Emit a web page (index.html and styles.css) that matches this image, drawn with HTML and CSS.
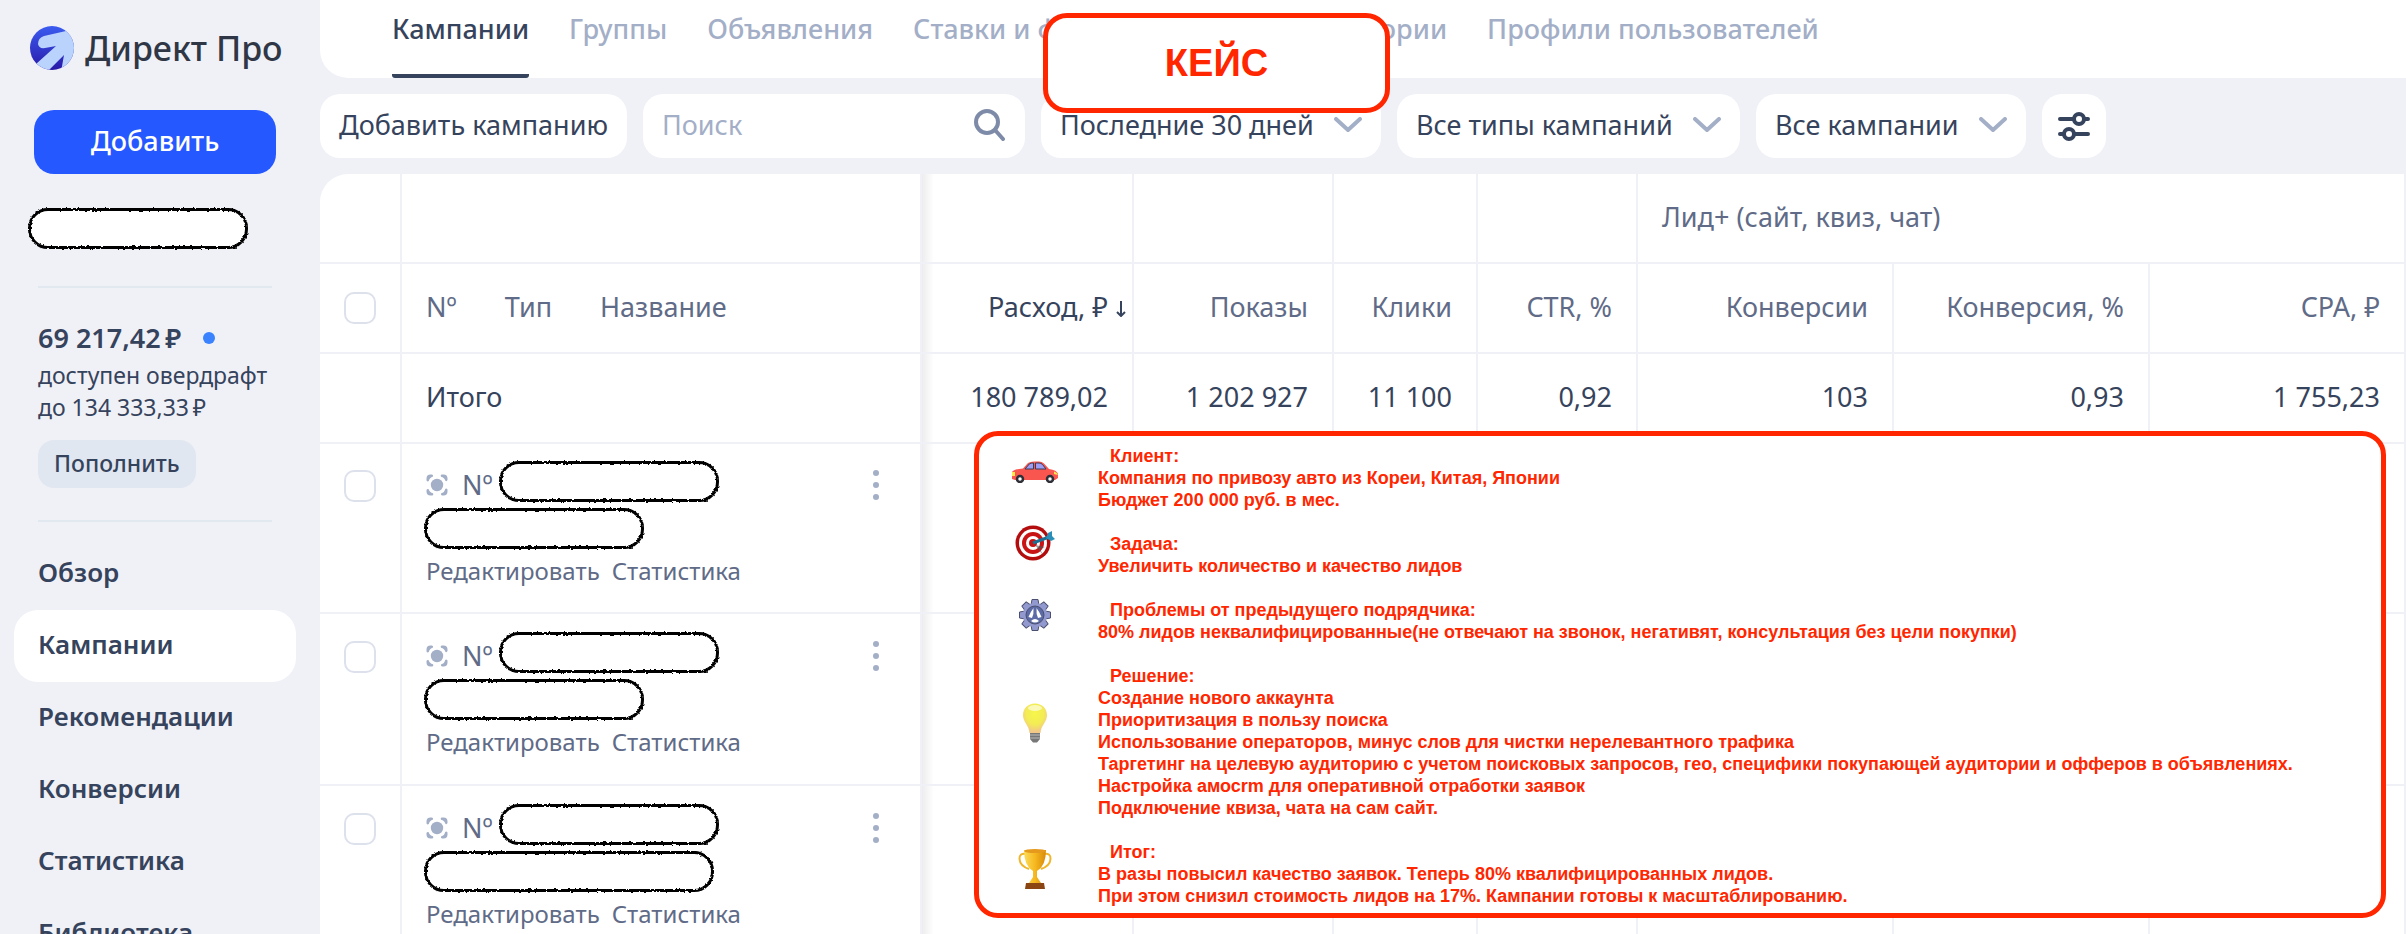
FILE: index.html
```html
<!DOCTYPE html>
<html lang="ru">
<head>
  <meta charset="UTF-8">
  <title>Директ Про</title>
  <link rel="stylesheet" href="styles.css">
</head>
<body>

<!-- shared shapes -->
<svg class="defs" aria-hidden="true">
  <defs>
    <filter id="rough">
      <feTurbulence type="fractalNoise" baseFrequency="0.4" numOctaves="2" seed="4" result="noise"/>
      <feDisplacementMap in="SourceGraphic" in2="noise" scale="3" xChannelSelector="R" yChannelSelector="G"/>
    </filter>
    <symbol id="chevron" viewBox="0 0 28 16">
      <path d="M2 2 L14 13 L26 2" fill="none" stroke="currentColor" stroke-width="4" stroke-linecap="round" stroke-linejoin="round"/>
    </symbol>
    <symbol id="kind" viewBox="0 0 22 22">
      <circle cx="11" cy="11" r="6.2" fill="currentColor"/>
      <g fill="currentColor">
        <path id="corner" d="M0.5 6.5 V4.5 Q0.500 0.500 4.500 0.500 H6 Q7.500 1 7 2.500 Q3.500 3.500 2.800 7 Q1.500 8 0.500 6.500Z"/>
        <use href="#corner" transform="rotate(90 11 11)"/>
        <use href="#corner" transform="rotate(180 11 11)"/>
        <use href="#corner" transform="rotate(270 11 11)"/>
      </g>
    </symbol>
    <symbol id="dots" viewBox="0 0 6 30">
      <g fill="currentColor"><circle cx="3" cy="3" r="3"/><circle cx="3" cy="15" r="3"/><circle cx="3" cy="27" r="3"/></g>
    </symbol>
  </defs>
</svg>

<div class="app">
  <aside class="sidebar">
    <a class="logo" href="#">
      <svg width="44" height="44" viewBox="0 0 44 44" aria-hidden="true">
        <defs>
          <linearGradient id="logoBlue" x1="0" y1="0" x2="0" y2="1">
            <stop offset="0" stop-color="#3a5cf0"/>
            <stop offset="1" stop-color="#2a18a8"/>
          </linearGradient>
          <clipPath id="logoClip"><circle cx="22" cy="22" r="22"/></clipPath>
        </defs>
        <g clip-path="url(#logoClip)">
          <rect width="44" height="44" fill="url(#logoBlue)"/>
          <path d="M36 5 L14 10 Q8 12 8 18 Q9 23 15 22 L26 20 L6 38 L10 46 L19 44 L34 29 L31 46 H46 V8Z" fill="#b9d3fd"/>
        </g>
      </svg>
      <span>Директ Про</span>
    </a>
    <button class="btn-add" type="button">Добавить</button>
    <div class="blot blot-account"></div>
    <div class="balance">
      <p class="balance-sum">69&nbsp;217,42&#8201;₽ <i class="dot"></i></p>
      <p class="balance-note">доступен овердрафт<br>до 134&nbsp;333,33&#8201;₽</p>
      <button class="btn-pay" type="button">Пополнить</button>
    </div>
    <nav class="menu">
      <a href="#">Обзор</a>
      <a href="#" class="active">Кампании</a>
      <a href="#">Рекомендации</a>
      <a href="#">Конверсии</a>
      <a href="#">Статистика</a>
      <a href="#">Библиотека</a>
    </nav>
  </aside>

  <main class="content">
    <nav class="tabs">
      <a href="#" class="active">Кампании</a>
      <a href="#">Группы</a>
      <a href="#">Объявления</a>
      <a href="#">Ставки и фразы</a>
      <a href="#">Условия и аудитории</a>
      <a href="#">Профили пользователей</a>
    </nav>

    <div class="filters">
      <button class="box" type="button">Добавить кампанию</button>
      <label class="box search">
        <input type="text" placeholder="Поиск" aria-label="Поиск">
        <svg width="32" height="32" viewBox="0 0 32 32" aria-hidden="true">
          <g fill="none" stroke="currentColor" stroke-width="4" stroke-linecap="round">
            <circle cx="13" cy="13" r="11"/>
            <path d="M21 21 L29 30"/>
          </g>
        </svg>
      </label>
      <label class="box drop">
        <select aria-label="Период"><option>Последние 30 дней</option></select>
        <svg class="chevron"><use href="#chevron"/></svg>
      </label>
      <label class="box drop">
        <select aria-label="Тип кампании"><option>Все типы кампаний</option></select>
        <svg class="chevron"><use href="#chevron"/></svg>
      </label>
      <label class="box drop">
        <select aria-label="Кампании"><option>Все кампании</option></select>
        <svg class="chevron"><use href="#chevron"/></svg>
      </label>
      <button class="box tune" type="button" aria-label="Настройки">
        <svg width="32" height="32" viewBox="0 0 32 32" aria-hidden="true">
          <g fill="none" stroke="currentColor" stroke-width="4" stroke-linecap="round">
            <path d="M2 9 H15 M27 9 H30 M2 24 H5 M17 24 H30"/>
            <circle cx="21" cy="9" r="5"/>
            <circle cx="11" cy="24" r="5"/>
          </g>
        </svg>
      </button>
    </div>

    <table class="stats">
      <colgroup>
        <col class="c-check"><col class="c-name"><col class="c-cost"><col class="c-shows"><col class="c-clicks"><col class="c-ctr"><col class="c-goal"><col class="c-goal"><col class="c-goal">
      </colgroup>
      <thead>
        <tr>
          <td></td><td></td><td></td><td></td><td></td><td></td>
          <th colspan="3" class="group">Лид+ (сайт, квиз, чат)</th>
        </tr>
        <tr>
          <td class="check"><input type="checkbox" aria-label="Выбрать все"></td>
          <th class="name"><span>Nº</span><span>Тип</span><span>Название</span></th>
          <th class="sorted"><span>Расход, ₽<svg class="arrow" viewBox="0 0 10 16" aria-hidden="true"><path d="M5 0 V15 M1 11 L5 15 L9 11" fill="none" stroke="currentColor" stroke-width="2"/></svg></span></th>
          <th>Показы</th>
          <th>Клики</th>
          <th>CTR, %</th>
          <th>Конверсии</th>
          <th>Конверсия, %</th>
          <th>CPA, ₽</th>
        </tr>
      </thead>
      <tbody>
        <tr class="total">
          <td></td>
          <td class="name">Итого</td>
          <td>180&nbsp;789,02</td>
          <td>1&nbsp;202&nbsp;927</td>
          <td>11&nbsp;100</td>
          <td>0,92</td>
          <td>103</td>
          <td>0,93</td>
          <td>1&nbsp;755,23</td>
        </tr>
        <tr class="campaign">
          <td class="check"><input type="checkbox" aria-label="Выбрать кампанию"></td>
          <td class="info">
            <div class="info-top"><svg class="kind"><use href="#kind"/></svg>Nº<span class="blot"></span><button class="more" type="button" aria-label="Ещё"><svg><use href="#dots"/></svg></button></div>
            <div class="blot"></div>
            <div class="links"><a href="#">Редактировать</a><a href="#">Статистика</a></div>
          </td>
          <td></td><td></td><td></td><td></td><td></td><td></td><td></td>
        </tr>
        <tr class="campaign">
          <td class="check"><input type="checkbox" aria-label="Выбрать кампанию"></td>
          <td class="info">
            <div class="info-top"><svg class="kind"><use href="#kind"/></svg>Nº<span class="blot"></span><button class="more" type="button" aria-label="Ещё"><svg><use href="#dots"/></svg></button></div>
            <div class="blot"></div>
            <div class="links"><a href="#">Редактировать</a><a href="#">Статистика</a></div>
          </td>
          <td></td><td></td><td></td><td></td><td></td><td></td><td></td>
        </tr>
        <tr class="campaign">
          <td class="check"><input type="checkbox" aria-label="Выбрать кампанию"></td>
          <td class="info">
            <div class="info-top"><svg class="kind"><use href="#kind"/></svg>Nº<span class="blot"></span><button class="more" type="button" aria-label="Ещё"><svg><use href="#dots"/></svg></button></div>
            <div class="blot blot-long"></div>
            <div class="links"><a href="#">Редактировать</a><a href="#">Статистика</a></div>
          </td>
          <td></td><td></td><td></td><td></td><td></td><td></td><td></td>
        </tr>
      </tbody>
    </table>
  </main>

  <h1 class="note case-title">КЕЙС</h1>

  <section class="note case">
    <div class="case-icons" aria-hidden="true">
      <!-- car -->
      <svg width="48" height="22" viewBox="0 0 48 22">
        <path d="M1 18 L1 11 Q3 8 12 7.500 L17 2 Q19 0.500 23 0.500 H28 Q31 0.500 33 2.500 L38 8 Q46 9 47 13 V17 L44 19 H4Z" fill="#f9564f"/>
        <path d="M14 8 L18.500 2.800 Q20 2 22.500 2 V8Z M24.500 2 H28 Q30 2 31.500 3.500 L35 8 H24.500Z" fill="#9d9df5" stroke="#3c3c55"/>
        <path d="M1 11 H4 V15 H1Z M43 10.500 Q46 11 47 14 L43 13Z" fill="#ffe94d"/>
        <g fill="#fff" stroke="#2f2f38" stroke-width="2.500"><circle cx="9" cy="18" r="3"/><circle cx="39" cy="18" r="3"/></g>
      </svg>
      <!-- target -->
      <svg width="40" height="36" viewBox="0 0 40 36">
        <circle cx="18" cy="18" r="17.500" fill="#b30d0d"/>
        <circle cx="18" cy="18" r="14" fill="#fff"/>
        <circle cx="18" cy="18" r="11" fill="#c81414"/>
        <circle cx="18" cy="18" r="7" fill="#fff"/>
        <circle cx="18" cy="18" r="4" fill="#c81414"/>
        <path d="M20 20 L28 30 L25 24 L30 22Z" fill="#555" opacity="0.6"/>
        <path d="M18 18 L34 12" stroke="#1d6f93" stroke-width="3"/>
        <path d="M31 13 L33 8 L37 6 V11 L40 14 L36 16Z" fill="#2a8fb8"/>
      </svg>
      <!-- gear -->
      <svg width="32" height="32" viewBox="-16 -16 32 32">
        <g fill="#9299cf" stroke="#4b5070">
          <path id="tooth" d="M-4 -10 L-3 -15.500 H3 L4 -10Z"/>
          <use href="#tooth" transform="rotate(45)"/><use href="#tooth" transform="rotate(90)"/><use href="#tooth" transform="rotate(135)"/>
          <use href="#tooth" transform="rotate(180)"/><use href="#tooth" transform="rotate(225)"/><use href="#tooth" transform="rotate(270)"/><use href="#tooth" transform="rotate(315)"/>
        </g>
        <circle r="12" fill="#9299cf"/>
        <circle r="9" fill="#5c6aa6" stroke="#4b5070"/>
        <path d="M-1.500 -7 Q-4 -4 -6.500 2 L-3 3 Q-1 -1 -1.500 -7Z M1.500 -7 Q4 -4 6.500 2 L3 3 Q1 -1 1.500 -7Z M-4 6 Q0 2 4 6 Q0 9 -4 6Z" fill="#fff"/>
      </svg>
      <!-- bulb -->
      <svg width="26" height="40" viewBox="0 0 26 40">
        <defs>
          <radialGradient id="bulbGlow" cx="0.5" cy="0.35" r="0.6">
            <stop offset="0" stop-color="#f6f64a"/><stop offset="0.6" stop-color="#f3ec55"/><stop offset="1" stop-color="#f2c987"/>
          </radialGradient>
        </defs>
        <path d="M13 0.500 C20 0.500 25 5.500 25 12 C25 19 19 22 18.500 30 H7.500 C7 22 1 19 1 12 C1 5.500 6 0.500 13 0.500Z" fill="url(#bulbGlow)"/>
        <ellipse cx="13" cy="5" rx="7" ry="3" fill="#fff" opacity="0.6"/>
        <path d="M8 30 H18 V36 L15 39.500 H11 L8 36Z" fill="#777"/>
        <path d="M8 32 H18 M8 35 H18" stroke="#bbb"/>
      </svg>
      <!-- trophy -->
      <svg width="34" height="40" viewBox="0 0 34 40">
        <defs>
          <linearGradient id="gold" x1="0" x2="1"><stop offset="0" stop-color="#fbdc5a"/><stop offset="0.5" stop-color="#f6b81f"/><stop offset="1" stop-color="#d98a0c"/></linearGradient>
        </defs>
        <path d="M8 5 Q1 4 1.500 10 Q2 17 11 20 M26 5 Q33 4 32.500 10 Q32 17 23 20" fill="none" stroke="#efb62b" stroke-width="2"/>
        <path d="M6 1 H28 Q28 17 19 22 V28 L23 34 H11 L15 28 V22 Q6 17 6 1Z" fill="url(#gold)"/>
        <ellipse cx="17" cy="2" rx="11" ry="2" fill="#e59a1e"/>
        <path d="M8 34 H26 L27 40 H7Z" fill="#8a4512"/>
      </svg>
    </div>

    <div class="case-text">
      <div>
        <h2>Клиент:</h2>
        <p>Компания по привозу авто из Кореи, Китая, Японии</p>
        <p>Бюджет 200 000 руб. в мес.</p>
      </div>
      <div>
        <h2>Задача:</h2>
        <p>Увеличить количество и качество лидов</p>
      </div>
      <div>
        <h2>Проблемы от предыдущего подрядчика:</h2>
        <p>80% лидов неквалифицированные(не отвечают на звонок, негативят, консультация без цели покупки)</p>
      </div>
      <div>
        <h2>Решение:</h2>
        <p>Создание нового аккаунта</p>
        <p>Приоритизация в пользу поиска</p>
        <p>Использование операторов, минус слов для чистки нерелевантного трафика</p>
        <p>Таргетинг на целевую аудиторию с учетом поисковых запросов, гео, специфики покупающей аудитории и офферов в объявлениях.</p>
        <p>Настройка амосrm для оперативной отработки заявок</p>
        <p>Подключение квиза, чата на сам сайт.</p>
      </div>
      <div>
        <h2>Итог:</h2>
        <p>В разы повысил качество заявок. Теперь 80% квалифицированных лидов.</p>
        <p>При этом снизил стоимость лидов на 17%. Кампании готовы к масштаблированию.</p>
      </div>
    </div>
  </section>
</div>

</body>
</html>
```
FILE: styles.css
```css
* {
  box-sizing: border-box;
}

body {
  margin: 0;
  font-family: "Noto Sans", sans-serif;
  font-size: 27px;
  color: #36435c;
  background: #f0f1f7;
}

a {
  color: inherit;
  text-decoration: none;
}

p, h1, h2 {
  margin: 0;
}

button, input, select {
  font: inherit;
  color: inherit;
  border: none;
  padding: 0;
  background: none;
}

button {
  cursor: pointer;
}

.defs {
  position: absolute;
  width: 0;
  height: 0;
}

.app {
  position: relative;
  display: flex;
  height: 100vh;
  overflow: hidden;
}

/* Sidebar */
.sidebar {
  width: 320px;
  flex-shrink: 0;
  padding: 20px 24px 0 14px;
}

.logo {
  display: flex;
  align-items: center;
  gap: 11px;
  height: 56px;
  padding-left: 16px;
  font-size: 34px;
  font-weight: 500;
  color: #2f3747;
  white-space: nowrap;
}

.btn-add {
  display: block;
  width: 242px;
  height: 64px;
  margin: 34px 0 0 20px;
  padding-bottom: 3px;
  border-radius: 20px;
  background: #2658ff;
  color: white;
  font-weight: 500;
}

.blot {
  width: 220px;
  height: 41px;
  border: 3px solid #000;
  border-radius: 20px;
  background: white;
  filter: url(#rough);
}

.blot-account {
  margin: 34px 0 37px 14px;
}

.blot-long {
  width: 290px;
}

.balance {
  margin: 0 24px;
  padding: 34px 0 32px;
  border-top: 2px solid #e1e8f0;
  border-bottom: 2px solid #e1e8f0;
}

.balance-sum {
  display: flex;
  align-items: center;
  gap: 22px;
  font-weight: 600;
  line-height: 32px;
}

.dot {
  width: 12px;
  height: 12px;
  border-radius: 50%;
  background: #3b82ff;
}

.balance-note {
  margin-top: 5px;
  font-size: 23px;
  line-height: 32px;
  white-space: nowrap;
}

.btn-pay {
  display: block;
  height: 48px;
  margin-top: 17px;
  padding: 0 16px 2px;
  border-radius: 16px;
  background: #e1e7f0;
  font-size: 23px;
  font-weight: 500;
}

.menu {
  margin-top: 16px;
}

.menu a {
  display: block;
  padding: 0 24px 3px;
  border-radius: 24px;
  font-size: 26px;
  font-weight: 600;
  line-height: 69px;
}

.menu .active {
  background: white;
}

/* Top tabs and filters */
.content {
  flex: 1;
  min-width: 0;
}

.tabs {
  display: flex;
  gap: 40px;
  height: 78px;
  padding-left: 72px;
  border-bottom-left-radius: 28px;
  background: white;
  color: #a3aec7;
  font-weight: 500;
  line-height: 58px;
  white-space: nowrap;
}

.tabs .active {
  color: #36435c;
  border-bottom: 4px solid #36435c;
  border-radius: 3px;
}

.filters {
  display: flex;
  gap: 16px;
  padding: 16px 0;
}

.box {
  display: flex;
  align-items: center;
  height: 64px;
  padding: 0 19px 3px;
  border-radius: 20px;
  background: white;
  white-space: nowrap;
}

.search {
  width: 382px;
  color: #7e8ba8;
}

.search input {
  flex: 1;
  min-width: 0;
  outline: none;
}

.search input::placeholder {
  color: #a3aec7;
  opacity: 1;
}

.drop {
  gap: 20px;
}

.drop select {
  appearance: none;
  outline: none;
}

.chevron {
  width: 28px;
  height: 16px;
  color: #a3aec7;
}

.tune {
  padding: 0 16px;
}

/* Table */
.stats {
  width: 100%;
  table-layout: fixed;
  border-collapse: separate;
  border-spacing: 0;
  border-top-left-radius: 28px;
  background: white;
}

.c-check { width: 82px; }
.c-name { width: 520px; }
.c-cost { width: 212px; }
.c-shows { width: 200px; }
.c-clicks { width: 144px; }
.c-ctr { width: 160px; }
.c-goal { width: 256px; }

.stats th,
.stats td {
  height: 90px;
  padding: 0 24px 3px;
  border-right: 2px solid #f0f1f7;
  border-bottom: 2px solid #f0f1f7;
  font-weight: 400;
  text-align: right;
  white-space: nowrap;
}

.stats th {
  color: #5f6b87;
}

/* shadow of the pinned columns */
.stats tr > :nth-child(3) {
  background: linear-gradient(to right, #ededef, #fff 12px);
}

.stats .check {
  padding-bottom: 0;
  text-align: left;
}

.stats .group,
.stats .name {
  text-align: left;
}

.name span {
  margin-right: 48px;
}

.stats .sorted {
  color: #36435c;
}

.sorted span {
  position: relative;
}

.arrow {
  position: absolute;
  left: 100%;
  bottom: 8px;
  width: 10px;
  height: 16px;
  margin-left: 8px;
}

input[type="checkbox"] {
  appearance: none;
  display: block;
  width: 32px;
  height: 32px;
  margin: 0;
  border: 2px solid #dde1ec;
  border-radius: 10px;
  background: white;
}

.stats .campaign td {
  height: 172px;
  padding-top: 18px;
  vertical-align: top;
}

/* the row right under the totals is a little shorter */
.stats .total + .campaign td {
  height: 170px;
  padding-top: 17px;
}

.campaign .check input {
  margin-top: 9px;
}

.stats .info {
  text-align: left;
  padding-left: 22px;
}

.info-top {
  display: flex;
  align-items: center;
  height: 47px;
  color: #5f6b87;
}

.kind {
  width: 22px;
  height: 22px;
  margin: 0 14px 0 2px;
  color: #a3aec7;
}

.info-top .blot {
  align-self: flex-start;
  margin-left: 6px;
}

.more {
  display: flex;
  margin: 0 17px 0 auto;
  color: #a3aec7;
}

.more svg {
  width: 6px;
  height: 30px;
}

.links {
  display: flex;
  gap: 12px;
  padding: 6px 2px;
  font-size: 24px;
  line-height: 32px;
  color: #5f6b87;
}

/* Case notes over the page */
.note {
  position: absolute;
  border: 5px solid #ff2600;
  border-radius: 24px;
  background: white;
  color: #ff2600;
  font-family: "Liberation Sans", Arial, sans-serif;
  font-weight: 700;
}

.case-title {
  top: 13px;
  left: 1043px;
  width: 347px;
  height: 100px;
  font-size: 38px;
  line-height: 90px;
  text-align: center;
}

.case {
  top: 431px;
  left: 974px;
  right: 20px;
  display: flex;
  padding: 9px 32px 6px;
  font-size: 18px;
  line-height: 22px;
}

.case-icons {
  display: grid;
  grid-template-rows: 38px 78px 70px 112px 146px;
  align-content: start;
  align-items: end;
  justify-items: center;
  width: 48px;
  margin-right: 39px;
}

.case-text {
  display: flex;
  flex-direction: column;
  gap: 22px;
}

.case h2 {
  padding-left: 12px;
  font-size: inherit;
}
```
